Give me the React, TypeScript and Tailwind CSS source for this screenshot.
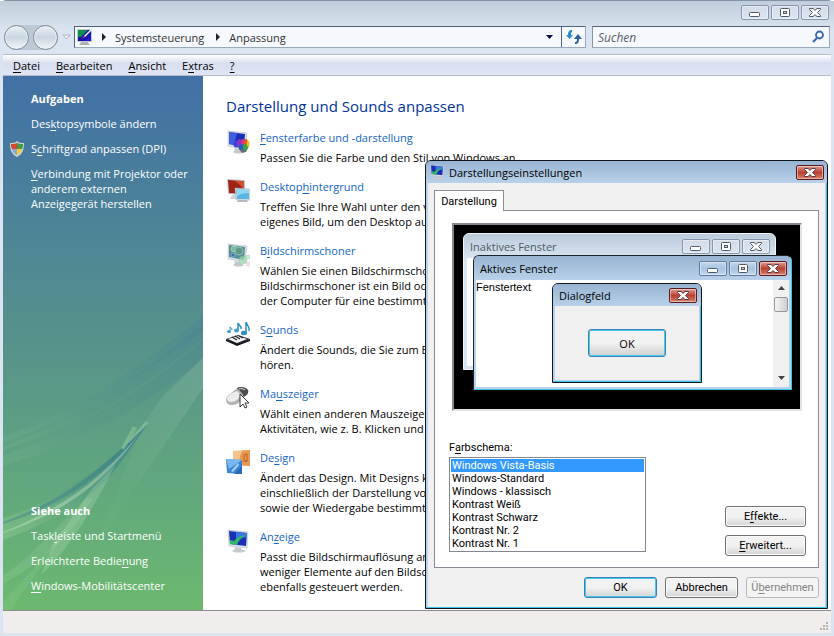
import type { ReactNode } from 'react'
import clsx from 'clsx'

type CaptionKind = 'min' | 'max' | 'close'
type CaptionTone = 'idle' | 'active' | 'danger'

const captionTones: Record<CaptionTone, string> = {
  idle: 'border-[#8795ad] bg-linear-to-b from-[#d3dce8] to-[#dbe5f2]',
  active: 'border-[#62799f] bg-linear-to-b from-[#c3d7ec] via-[#a9c4df] to-[#c0d9f0]',
  danger: 'border-[#5a1a20] bg-linear-to-b from-[#dd9c92] via-[#b9402f] to-[#d5806c]'
}

const captionLabels: Record<CaptionKind, string> = {
  min: 'Minimieren',
  max: 'Maximieren',
  close: 'Schließen'
}

function CaptionButton({ kind, tone }: { kind: CaptionKind; tone: CaptionTone }) {
  const line = tone === 'danger' ? '#5c3a42' : '#535b68'

  return (
    <button
      type="button"
      aria-label={captionLabels[kind]}
      className={clsx(
        'flex h-[15px] w-7 shrink-0 items-center justify-center rounded-[2px] border shadow-[inset_0_0_0_1px_rgba(255,255,255,0.45)]',
        captionTones[tone]
      )}
    >
      <svg width="14" height="11" viewBox="0 0 14 11" fill="none">
        {kind === 'min' && <rect x="1.5" y="5.5" width="10" height="4" rx="1" fill="#fff" stroke={line} />}
        {kind === 'max' && (
          <>
            <rect x="2.5" y="1.5" width="9" height="8" rx="1" fill="#fff" stroke={line} />
            <rect x="5.5" y="4.5" width="3" height="2" fill="#c9d4e2" stroke={line} />
          </>
        )}
        {kind === 'close' && (
          <path
            d="M1.500 1.5h3.500L7 3.400l2-1.900h3.500v1L9.500 5.500l3 3v1H9L7 7.600 5 9.500H1.500v-1l3-3-3-3z"
            fill="#fff"
            stroke={line}
          />
        )}
      </svg>
    </button>
  )
}

// Underlines the access key that follows an ampersand
function Mnemonic({ text }: { text: string }) {
  const at = text.indexOf('&')
  if (at < 0) return <>{text}</>
  return (
    <>
      {text.slice(0, at)}
      <u className="underline-offset-2">{text[at + 1]}</u>
      {text.slice(at + 2)}
    </>
  )
}

function Monitor({ children }: { children?: ReactNode }) {
  return (
    <>
      <path d="M8 18l6 1 1 2c2 0 3 1 3 1-2 2-9 2-11 0l2-2z" fill="#c4c8cc" />
      <path d="M2 1l19 2-2 16-17-3z" fill="#d9dde2" stroke="#b7bcc4" strokeWidth="0.500" />
      {children}
    </>
  )
}

function ColorIcon() {
  return (
    <svg width="24" height="24" viewBox="0 0 24 24">
      <Monitor>
        <path d="M3 2l16 2-1 13-15-3z" fill="#1c2fb8" />
        <path d="M3 2l8 1-3 12-5-1z" fill="#4a6be8" opacity="0.800" />
      </Monitor>
      <path d="M10 15l6 8 4-1 3-6z" fill="#666f78" />
      <ellipse cx="10" cy="14" rx="2.500" ry="3.500" fill="#3c43d6" />
      <ellipse cx="13.500" cy="13" rx="2.500" ry="4" fill="#8b35c9" />
      <ellipse cx="17" cy="13" rx="2" ry="4" fill="#d92f8e" />
      <ellipse cx="20" cy="13" rx="2" ry="4" fill="#e2572a" />
      <ellipse cx="22" cy="14" rx="1.500" ry="3.500" fill="#e8c020" />
      <ellipse cx="19" cy="17" rx="2.500" ry="3" fill="#2fa84a" />
      <ellipse cx="15" cy="17" rx="2" ry="3" fill="#2c58cc" />
    </svg>
  )
}

function WallpaperIcon() {
  return (
    <svg width="24" height="24" viewBox="0 0 24 24">
      <path d="M6 16h7l1 4H4z" fill="#cfd3d8" />
      <path d="M1 0l18 1v15L2 15z" fill="#c9ccd1" />
      <path d="M2 1l16 1v13L3 14z" fill="#a02416" />
      <path d="M9 2l9 0v9l-4-5z" fill="#cf5030" />
      <path d="M12 21h9l1 2H11z" fill="#b9bec5" />
      <path d="M9 9l15 1v11H10z" fill="#dfe5ea" stroke="#9aa3ad" strokeWidth="0.500" />
      <path d="M10 10l13 1v9H11z" fill="#58b7e2" />
      <path d="M10 10l13 1v3c-5 0-9 1-12 3z" fill="#8ed6f2" />
    </svg>
  )
}

function ScreensaverIcon() {
  return (
    <svg width="24" height="24" viewBox="0 0 24 24">
      <Monitor>
        <path d="M3 2l16 2-1 13-15-3z" fill="#568f9b" />
        <circle cx="8" cy="6" r="3" fill="#7fb99c" stroke="#b7d9bf" strokeWidth="0.700" />
        <circle cx="13" cy="8" r="4" fill="#5c9a86" stroke="#a3d2bd" strokeWidth="0.700" />
        <circle cx="7" cy="12" r="2" fill="#3d74a6" stroke="#8fc1d8" strokeWidth="0.700" />
      </Monitor>
      <circle cx="17" cy="17" r="4" fill="#a5dcb2" opacity="0.700" stroke="#70b890" strokeWidth="0.600" />
      <circle cx="22" cy="14" r="2" fill="#d2f0de" stroke="#91c8aa" strokeWidth="0.500" />
      <circle cx="22" cy="21" r="2" fill="#f5e2ef" stroke="#d8b6cc" strokeWidth="0.500" />
    </svg>
  )
}

function SoundsIcon() {
  return (
    <svg width="24" height="24" viewBox="0 0 24 24">
      <path d="M0 17l12-4 12 4-13 6z" fill="#2f3237" />
      <path d="M2 17l10-3 9 3-10 4z" fill="#f4f5f6" />
      <path d="M6 15l5 3M9 14l5 3M13 14l4 2" stroke="#24272b" strokeWidth="1.300" />
      <path d="M0 17l11 5v2L0 19zM24 17v2l-13 5v-2z" fill="#15171a" />
      <g fill="none" stroke="#2a8cc4">
        <path d="M4 9V5c1 1 2 1 2 3" strokeWidth="1" />
        <path d="M12 8V1c1 3 4 3 3 6" strokeWidth="1.500" />
        <path d="M20 10V0c1 3 4 5 3 9" strokeWidth="1.500" />
      </g>
      <ellipse cx="3" cy="9.500" rx="2" ry="1.500" fill="#3c9fd4" />
      <ellipse cx="10.500" cy="8.500" rx="2.500" ry="2" fill="#3c9fd4" />
      <ellipse cx="18" cy="11" rx="3" ry="2.200" fill="#2a8cc4" />
    </svg>
  )
}

function MouseIcon() {
  return (
    <svg width="24" height="24" viewBox="0 0 24 24">
      <path d="M0 14c0-5 8-8 11-12 3-2 8-1 11 2 1 3-1 5-4 7-4 5-7 8-12 8-3 0-6-2-6-5z" fill="#b0b2b4" />
      <path d="M1 12c2-4 7-6 10-7l4 4c-2 4-6 7-10 7-2 0-4-1-4-4z" fill="#ececec" />
      <path d="M11 2c3-2 9-1 11 2 1 3-1 5-4 7l-2-4z" fill="#4a4d51" />
      <path d="M13 3c2-1 5 0 6 1" stroke="#e5e5e5" fill="none" />
      <path d="M14 8v13l3-3 2 4 2-1-2-4h4z" fill="#fff" stroke="#222" strokeWidth="0.900" />
    </svg>
  )
}

function ThemeIcon() {
  return (
    <svg width="24" height="24" viewBox="0 0 24 24">
      <path d="M7 1l17-1v16l-17-1z" fill="#e9964e" />
      <path d="M7 1h9l-3 9H7z" fill="#f6c38c" />
      <path d="M21 4v7M21 4l-3 1v7" stroke="#b5682c" fill="none" />
      <ellipse cx="20" cy="11" rx="1.500" ry="1" fill="#b5682c" />
      <path d="M0 9l16 1v14l-15-1z" fill="#3c86d4" />
      <path d="M0 9l16 1-13 9z" fill="#7ab7ee" />
      <path d="M5 21l7-8 1 2-6 7z" fill="#a9d3f8" />
      <path d="M12 20c2-1 3-3 4-6v10H8z" fill="#2a68b8" />
    </svg>
  )
}

function DisplayIcon({ size = 24 }: { size?: number }) {
  return (
    <svg width={size} height={size} viewBox="0 0 24 24">
      <path d="M9 18l6 1 1 2c3 0 4 1 4 1-3 2-12 2-14 0l3-2z" fill="#c6cacf" />
      <path d="M2 1l20 2-1 16-18-2z" fill="#dde0e4" stroke="#b3b8bf" strokeWidth="0.500" />
      <path d="M3 2l18 2-1 13-16-2z" fill="#1a30b4" />
      <path d="M10 3l11 1v5c-5-1-9 0-11 1z" fill="#3a78de" />
      <path d="M4 11l4 1c3-4 7-5 12-6-5 3-8 6-9 10l-7-1z" fill="#35b56a" />
    </svg>
  )
}

function ControlPanelIcon() {
  return (
    <svg width="18" height="18" viewBox="0 0 18 18" className="shrink-0">
      <path d="M6 13h5l3 4H3z" fill="#aeb3ba" />
      <rect x="1" y="1" width="15" height="13" fill="#c3c8d0" />
      <rect x="2" y="2" width="13" height="11" fill="#1413a4" />
      <path d="M2 2h10L5 9H2z" fill="#0f8d4e" />
      <path d="M15 5v8H9z" fill="#1c1bc8" />
      <path d="M8 8l7-7 1 1-7 7z" fill="#fff" />
      <path d="M5 11l3-3 1 1z" fill="#d13c8d" />
    </svg>
  )
}

function ShieldIcon() {
  return (
    <svg width="14" height="16" viewBox="0 0 14 16">
      <path d="M7 0c2 2 4 2 7 2 0 6-1 11-7 14C1 13 0 8 0 2c3 0 5 0 7-2z" fill="#c9d1da" />
      <path d="M7 2v6H2c-1-2-1-3-1-5 2 0 4 0 6-1z" fill="#d8452f" />
      <path d="M7 2c2 1 4 1 6 1 0 2 0 3-1 5H7z" fill="#3f9d46" />
      <path d="M2 8h5v6C4 13 3 11 2 8z" fill="#8aa6cf" />
      <path d="M12 8H7v6c3-1 4-3 5-6z" fill="#f2cd3a" />
    </svg>
  )
}

function Aurora() {
  return (
    <svg
      className="pointer-events-none absolute inset-x-0 bottom-0 h-[295px] w-full"
      viewBox="0 -25 200 295"
      preserveAspectRatio="none"
    >
      <defs>
        <linearGradient id="band" x1="1" y1="0" x2="0" y2="1">
          <stop offset="0" stopColor="#3f7f96" stopOpacity="0.280" />
          <stop offset="0.600" stopColor="#4b8d8c" stopOpacity="0.160" />
          <stop offset="1" stopColor="#8acb9b" stopOpacity="0.150" />
        </linearGradient>
        <linearGradient id="feather" x1="1" y1="0" x2="0" y2="1">
          <stop offset="0" stopColor="#37788f" stopOpacity="0.900" />
          <stop offset="0.500" stopColor="#4a9383" stopOpacity="0.400" />
          <stop offset="1" stopColor="#b4e5a6" stopOpacity="0.250" />
        </linearGradient>
        <linearGradient id="beam" x1="1" y1="0" x2="0" y2="1">
          <stop offset="0" stopColor="#a9cfc0" stopOpacity="0.220" />
          <stop offset="0.700" stopColor="#a9dfa0" stopOpacity="0.040" />
          <stop offset="1" stopColor="#a9dfa0" stopOpacity="0" />
        </linearGradient>
      </defs>
      <path d="M200-24C150 15 90 65 0 97v6c80-28 140-68 200-112z" fill="url(#band)" />
      <path d="M200-16C140 32 80 78 0 106v4C80 85 145 45 200-2z" fill="url(#band)" />
      <path d="M200 0C150 45 80 88 0 116v10C90 98 160 55 200 18z" fill="url(#band)" />
      <path d="M200 18L160 56 140 84 90 210 200 48z" fill="url(#beam)" />
      <path d="M146 82C110 120 60 160 0 178v22c60-22 100-50 118-78z" fill="url(#feather)" />
      <path d="M146 82C100 130 60 160 0 182v2c70-22 110-58 146-102z" fill="#347a8d" opacity="0.400" />
      <path d="M138 92C100 138 60 168 0 192v1c66-22 104-54 138-101z" fill="#d6f0cf" opacity="0.350" />
      <path d="M112 125L88 150 50 205l-12 30C70 205 95 160 112 125z" fill="#cfeccb" opacity="0.220" />
      <path d="M84 158C50 190 30 215 0 236v8c40-22 70-50 90-86z" fill="#bfe5bc" opacity="0.150" />
      <path d="M130 86l4 2-13 22-3-2zM143 81l3 2-20 20-1-2z" fill="#8fc79c" opacity="0.600" />
      <path d="M60 190C40 220 20 240 0 262v8h8c20-30 40-55 60-85z" fill="#b9e6a8" opacity="0.120" />
    </svg>
  )
}

const menus = ['&Datei', '&Bearbeiten', '&Ansicht', 'E&xtras', '&?']

const tasks = [
  { label: 'Des&ktopsymbole ändern', shield: false },
  { label: 'S&chriftgrad anpassen (DPI)', shield: true },
  { label: '&Verbindung mit Projektor oder anderem externen Anzeigegerät herstellen', shield: false }
]

const seeAlso = ['Task&leiste und Startmenü', 'Erleichterte Bedie&nung', '&Windows-Mobilitätscenter']

const settings = [
  {
    title: '&Fensterfarbe und -darstellung',
    icon: <ColorIcon />,
    lines: ['Passen Sie die Farbe und den Stil von Windows an.']
  },
  {
    title: 'Desktop&hintergrund',
    icon: <WallpaperIcon />,
    lines: ['Treffen Sie Ihre Wahl unter den verfügbaren Farben', 'eigenes Bild, um den Desktop auszuschmücken.']
  },
  {
    title: 'B&ildschirmschoner',
    icon: <ScreensaverIcon />,
    lines: [
      'Wählen Sie einen Bildschirmschoner aus. Ein',
      'Bildschirmschoner ist ein Bild oder eine Animation, wenn',
      'der Computer für eine bestimmte Zeit im Leerlauf ist.'
    ]
  },
  {
    title: 'S&ounds',
    icon: <SoundsIcon />,
    lines: ['Ändert die Sounds, die Sie zum Beispiel beim Empfangen', 'hören.']
  },
  {
    title: 'Ma&uszeiger',
    icon: <MouseIcon />,
    lines: ['Wählt einen anderen Mauszeiger aus. Sie können', 'Aktivitäten, wie z. B. Klicken und Auswählen, anpassen.']
  },
  {
    title: 'De&sign',
    icon: <ThemeIcon />,
    lines: [
      'Ändert das Design. Mit Designs können Sie Elemente,',
      'einschließlich der Darstellung von Menüs und Symbolen,',
      'sowie der Wiedergabe bestimmter Sounds ändern.'
    ]
  },
  {
    title: 'An&zeige',
    icon: <DisplayIcon />,
    lines: [
      'Passt die Bildschirmauflösung an, so dass mehr oder',
      'weniger Elemente auf den Bildschirm passen. Flimmern kann',
      'ebenfalls gesteuert werden.'
    ]
  }
]

const schemes = [
  'Windows Vista-Basis',
  'Windows-Standard',
  'Windows - klassisch',
  'Kontrast Weiß',
  'Kontrast Schwarz',
  'Kontrast Nr. 2',
  'Kontrast Nr. 1'
]

function Chevron() {
  return (
    <svg width="5" height="8" viewBox="0 0 5 8" className="mx-2 shrink-0">
      <path d="M0 0l4 4-4 4z" fill="#222" />
    </svg>
  )
}

function Toolbar() {
  return (
    <div className="flex h-[30px] items-center pr-1 pl-1">
      <div className="flex shrink-0 items-center">
        <div className="flex gap-1 rounded-full bg-[#bccad8]">
          {['Zurück', 'Vorwärts'].map(label => (
            <button
              key={label}
              type="button"
              aria-label={label}
              className="size-[25px] rounded-full border border-[#7d8b9a] bg-linear-to-b from-[#e9eff5] via-[#cbd6e1] to-[#f2f6fa] shadow-[inset_0_0_0_1px_#edf2f7]"
            />
          ))}
        </div>
        <button type="button" aria-label="Verlauf" className="flex w-4 justify-center">
          <svg width="9" height="6" viewBox="0 0 9 6">
            <path d="M1 1h7L4.500 5z" fill="#eef3f8" stroke="#9ba9b8" strokeWidth="0.800" />
          </svg>
        </button>
      </div>

      <div className="flex h-[22px] flex-1 items-center border border-[#9aa9bc] border-t-[#54617a] border-l-[#54617a] bg-[#f5f8fc] pl-px">
        <ControlPanelIcon />
        <Chevron />
        <a href="#systemsteuerung" className="pr-1 text-[#333]">
          Systemsteuerung
        </a>
        <Chevron />
        <a href="#anpassung" className="text-[#333]">
          Anpassung
        </a>
        <button type="button" aria-label="Adresse auswählen" className="ml-auto flex h-full w-[22px] items-center justify-center">
          <svg width="8" height="4" viewBox="0 0 8 4">
            <path d="M0 0h7L3.500 4z" fill="#0a0a50" />
          </svg>
        </button>
        <button
          type="button"
          aria-label="Aktualisieren"
          className="flex h-full w-6 items-center justify-center border-l border-[#54617a]"
        >
          <svg width="16" height="14" viewBox="0 0 16 14">
            <path d="M0 5h2c0-3 1-5 4-5v2C5 2 5 3 5 5h2L3.500 9z" fill="#2f8bc8" />
            <path d="M8 9l4-5 4 5h-3c0 3-1 5-4 5v-2c2 0 2-1 2-3z" fill="#2d5fa0" />
          </svg>
        </button>
      </div>

      <div className="ml-[6px] flex h-[22px] w-[238px] items-center border border-[#9aa9bc] border-t-[#54617a] border-l-[#8593a8] bg-[#f5f8fc] pr-1 pl-[5px]">
        <input
          type="text"
          aria-label="Suchen"
          placeholder="Suchen"
          className="h-full min-w-0 flex-1 bg-transparent text-xs italic outline-none placeholder:text-[#5a5f66]"
        />
        <button type="button" aria-label="Suche starten">
          <svg width="14" height="14" viewBox="0 0 14 14" fill="none">
            <circle cx="8.500" cy="5" r="3.500" stroke="#3768a8" strokeWidth="1.800" />
            <path d="M6 8l-4 4" stroke="#3768a8" strokeWidth="2.200" />
          </svg>
        </button>
      </div>
    </div>
  )
}

function Sidebar() {
  return (
    <aside className="relative flex w-[200px] shrink-0 flex-col bg-linear-to-b from-[#4270a5] via-[#57928a] to-[#6cb96f] pt-[15px] pb-[17px] pl-7 text-white">
      <Aurora />
      <nav className="relative flex flex-col gap-[10px]">
        <h2 className="font-bold">Aufgaben</h2>
        {tasks.map(task => (
          <a key={task.label} href="#aufgabe" className="relative block pr-2">
            {task.shield && (
              <span className="absolute top-0 -left-[21px]">
                <ShieldIcon />
              </span>
            )}
            <Mnemonic text={task.label} />
          </a>
        ))}
      </nav>
      <nav className="relative mt-auto flex flex-col gap-[10px]">
        <h2 className="font-bold">Siehe auch</h2>
        {seeAlso.map(label => (
          <a key={label} href="#siehe-auch">
            <Mnemonic text={label} />
          </a>
        ))}
      </nav>
    </aside>
  )
}

function SettingsList() {
  return (
    <main className="min-w-0 flex-1 overflow-hidden bg-white pt-5 pb-4 pl-[23px]">
      <h1 className="text-[15px] leading-5 text-[#003399]">Darstellung und Sounds anpassen</h1>
      <ul className="mt-[14px] flex flex-col gap-[14px]">
        {settings.map(item => (
          <li key={item.title} className="flex gap-[10px]">
            <div className="w-6 shrink-0">{item.icon}</div>
            <div className="whitespace-nowrap">
              <a href="#einstellung" className="block text-[#1464c8]">
                <Mnemonic text={item.title} />
              </a>
              <p className="mt-[5px] text-black">
                {item.lines.map(line => (
                  <span key={line} className="block">
                    {line}
                  </span>
                ))}
              </p>
            </div>
          </li>
        ))}
      </ul>
    </main>
  )
}

function DialogButton({ label, isDefault, disabled }: { label: string; isDefault?: boolean; disabled?: boolean }) {
  return (
    <button
      type="button"
      disabled={disabled}
      className={clsx(
        'h-[21px] rounded-[3px] border whitespace-nowrap',
        disabled && 'border-[#b5b9bb] bg-[#f4f4f4] text-[#838383]',
        !disabled && 'bg-linear-to-b from-[#f2f2f2] from-50% to-[#d3d3d3] text-black',
        !disabled && isDefault && 'border-[#3c7fb1] shadow-[inset_0_0_0_1px_#48c8ec]',
        !disabled && !isDefault && 'border-[#707070] shadow-[inset_0_0_0_1px_#fcfcfc]'
      )}
    >
      <Mnemonic text={label} />
    </button>
  )
}

function Preview() {
  return (
    <div className="relative mr-1 ml-[3px] h-[188px] overflow-hidden border-2 border-t-[#828790] border-r-[#e3e3e3] border-b-[#e3e3e3] border-l-[#828790] bg-black font-['Open_Sans'] leading-[15px]">
      {/* Inactive window */}
      <div className="absolute top-2 left-[9px] flex h-[137px] w-[313px] flex-col rounded-t-[6px] border border-[#f0f4f8] bg-[#d7e4f2]">
        <div className="flex h-[24px] items-center gap-[2px] rounded-t-[5px] bg-linear-to-b from-[#bccbda] to-[#d7e4f2] pr-[5px] pl-[6px]">
          <span className="flex-1 text-[#4f5a63]">Inaktives Fenster</span>
          <CaptionButton kind="min" tone="idle" />
          <CaptionButton kind="max" tone="idle" />
          <CaptionButton kind="close" tone="idle" />
        </div>
        <div className="mx-[3px] mb-[3px] flex-1 bg-white" />
      </div>

      {/* Active window */}
      <div className="absolute top-[30px] left-[19px] flex h-[135px] w-[319px] flex-col rounded-t-[6px] border border-t-[#1b232b] border-r-[#38c5ea] border-b-[#38c5ea] border-l-[#1b232b] bg-[#b9d1ea]">
        <div className="flex h-[24px] items-center gap-[2px] rounded-t-[5px] bg-linear-to-b from-[#98b4d2] to-[#b9d1ea] pr-1 pl-[6px]">
          <span className="flex-1 text-black">Aktives Fenster</span>
          <CaptionButton kind="min" tone="active" />
          <CaptionButton kind="max" tone="active" />
          <CaptionButton kind="close" tone="danger" />
        </div>
        <div className="mx-[2px] mb-[2px] flex flex-1 justify-between bg-white">
          <span className="font-['Liberation_Sans'] text-black">Fenstertext</span>
          <div className="flex w-4 flex-col items-center bg-[#f1f1f1]">
            <svg width="7" height="17" viewBox="0 0 7 17">
              <path d="M0 10l3.500-4L7 10z" fill="#444" />
            </svg>
            <div className="h-[15px] w-[14px] rounded-[2px] border border-[#979797] bg-linear-to-r from-[#f5f5f5] to-[#d0d0d4]" />
            <svg width="7" height="17" viewBox="0 0 7 17" className="mt-auto">
              <path d="M0 6h7l-3.500 4z" fill="#444" />
            </svg>
          </div>
        </div>
      </div>

      {/* Message box */}
      <div className="absolute top-[58px] left-[98px] flex h-[100px] w-[150px] flex-col rounded-t-[6px] border border-[#10161c] bg-[#b9d1ea] shadow-[inset_-1px_-1px_0_#38c5ea]">
        <div className="flex h-[22px] items-center rounded-t-[5px] bg-linear-to-b from-[#98b4d2] to-[#b9d1ea] pr-1 pl-[6px]">
          <span className="flex-1 text-black">Dialogfeld</span>
          <CaptionButton kind="close" tone="danger" />
        </div>
        <div className="mx-[2px] mb-[2px] flex flex-1 items-center justify-center bg-[#f0f0f0]">
          <button
            type="button"
            className="h-7 w-[78px] rounded-[3px] border border-[#3c7fb1] bg-linear-to-b from-[#f2f2f2] from-50% to-[#cfcfcf] text-black shadow-[inset_0_0_0_1px_#48c8ec]"
          >
            OK
          </button>
        </div>
      </div>
    </div>
  )
}

function AppearanceDialog() {
  return (
    <section
      role="dialog"
      aria-label="Darstellungseinstellungen"
      className="absolute top-[159px] right-[6px] w-[403px] rounded-t-[6px] border border-[#10161c] bg-[#b9d1ea] pb-px shadow-[inset_-1px_-1px_0_#38c5ea]"
    >
      <header className="flex h-[22px] items-center rounded-t-[5px] bg-linear-to-b from-[#98b4d2] to-[#b9d1ea] pr-[3px] pl-[3px]">
        <DisplayIcon size={16} />
        <h2 className="flex-1 pl-1 text-black">Darstellungseinstellungen</h2>
        <CaptionButton kind="close" tone="danger" />
      </header>

      <div className="mx-[2px] bg-[#f0f0f0] px-[6px] pt-[7px] pb-[9px] font-['Roboto'] leading-[13px] text-black">
        <div role="tablist" className="flex">
          <button
            type="button"
            role="tab"
            aria-selected="true"
            className="relative z-10 -mb-px h-[21px] w-[70px] border border-b-0 border-[#898c95] bg-white"
          >
            Darstellung
          </button>
        </div>

        <div role="tabpanel" className="border border-[#898c95] bg-white pt-3 pr-3 pb-[11px] pl-[14px]">
          <Preview />
          <div className="mt-[30px] flex justify-between">
            <div>
              <label htmlFor="scheme" className="block h-4">
                <Mnemonic text="F&arbschema:" />
              </label>
              <select
                id="scheme"
                size={7}
                defaultValue="Windows Vista-Basis"
                className="block h-[95px] w-[197px] overflow-hidden rounded-none border border-[#828790] bg-white p-px outline-none"
              >
                {schemes.map(name => (
                  <option
                    key={name}
                    className="h-[13px] min-h-0 px-px py-0 leading-[13px] checked:bg-[#3399ff] checked:bg-linear-to-b checked:from-[#3399ff] checked:to-[#3399ff] checked:text-white"
                  >
                    {name}
                  </option>
                ))}
              </select>
            </div>
            <div className="flex w-[81px] flex-col justify-end gap-2 pt-[65px]">
              <DialogButton label="E&ffekte..." />
              <DialogButton label="&Erweitert..." />
            </div>
          </div>
        </div>

        <div className="mt-[9px] ml-auto grid w-[235px] grid-cols-3 gap-2">
          <DialogButton label="OK" isDefault />
          <DialogButton label="Abbrechen" />
          <DialogButton label="Ü&bernehmen" disabled />
        </div>
      </div>
    </section>
  )
}

export default function App() {
  return (
    <div className="relative flex min-h-screen flex-col rounded-t-[6px] border-t border-[#8393a5] bg-[#dae5f1] font-['Open_Sans',sans-serif] text-[11px] leading-[15px]">
      <header className="bg-linear-to-b from-[#bfceda] to-[#dae5f1] to-60%">
        <div className="flex h-[21px] items-end justify-end gap-[2px] pr-[5px] pb-[2px]">
          <CaptionButton kind="min" tone="idle" />
          <CaptionButton kind="max" tone="idle" />
          <CaptionButton kind="close" tone="idle" />
        </div>
        <Toolbar />
      </header>

      <div className="mx-[3px] mt-[2px] mb-[3px] flex flex-1 flex-col">
        <nav className="flex h-[22px] items-center gap-4 border-y border-[#b1bccf] bg-linear-to-b from-white via-[#d9def0] via-40% to-[#e0e5f4] pl-[10px] text-black">
          {menus.map(menu => (
            <button key={menu} type="button">
              <Mnemonic text={menu} />
            </button>
          ))}
        </nav>

        <div className="flex flex-1">
          <Sidebar />
          <SettingsList />
        </div>

        <footer className="flex h-[23px] items-end justify-end border-t border-[#8e8e8e] bg-[#f0edec] p-[2px]">
          <svg width="9" height="9" viewBox="0 0 9 9" fill="#b5b2b0">
            <path d="M6 0h2v2H6zM3 3h2v2H3zM6 3h2v2H6zM0 6h2v2H0zM3 6h2v2H3zM6 6h2v2H6z" />
          </svg>
        </footer>
      </div>

      <AppearanceDialog />
    </div>
  )
}
